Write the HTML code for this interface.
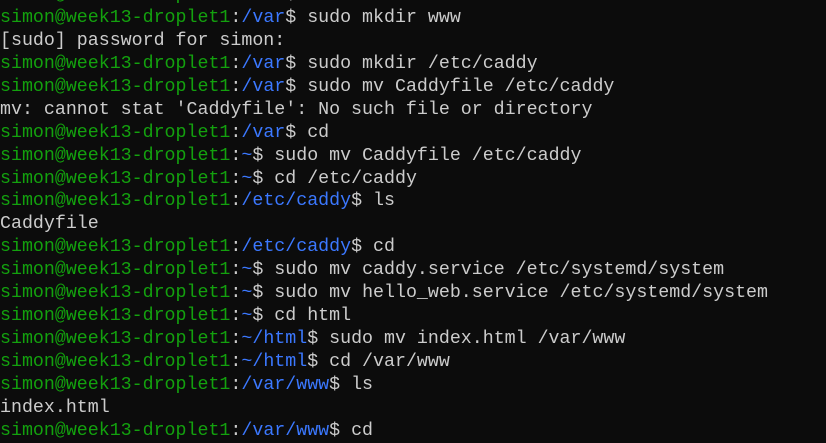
<!DOCTYPE html>
<html><head><style>
html,body{margin:0;padding:0;background:#0c0c0c;width:826px;height:424px;overflow:hidden}
pre{margin:0;position:absolute;left:0;top:-16px;font-family:"Liberation Mono",monospace;font-size:18.3px;line-height:22.94px;color:#cccccc;white-space:pre}
.g{color:#13a10e}.b{color:#3b78ff}
</style></head><body><pre><span class="g">simon@week13-droplet1</span>:<span class="b">/var</span>$ cd
<span class="g">simon@week13-droplet1</span>:<span class="b">/var</span>$ sudo mkdir www
[sudo] password for simon:
<span class="g">simon@week13-droplet1</span>:<span class="b">/var</span>$ sudo mkdir /etc/caddy
<span class="g">simon@week13-droplet1</span>:<span class="b">/var</span>$ sudo mv Caddyfile /etc/caddy
mv: cannot stat 'Caddyfile': No such file or directory
<span class="g">simon@week13-droplet1</span>:<span class="b">/var</span>$ cd
<span class="g">simon@week13-droplet1</span>:<span class="b">~</span>$ sudo mv Caddyfile /etc/caddy
<span class="g">simon@week13-droplet1</span>:<span class="b">~</span>$ cd /etc/caddy
<span class="g">simon@week13-droplet1</span>:<span class="b">/etc/caddy</span>$ ls
Caddyfile
<span class="g">simon@week13-droplet1</span>:<span class="b">/etc/caddy</span>$ cd
<span class="g">simon@week13-droplet1</span>:<span class="b">~</span>$ sudo mv caddy.service /etc/systemd/system
<span class="g">simon@week13-droplet1</span>:<span class="b">~</span>$ sudo mv hello_web.service /etc/systemd/system
<span class="g">simon@week13-droplet1</span>:<span class="b">~</span>$ cd html
<span class="g">simon@week13-droplet1</span>:<span class="b">~/html</span>$ sudo mv index.html /var/www
<span class="g">simon@week13-droplet1</span>:<span class="b">~/html</span>$ cd /var/www
<span class="g">simon@week13-droplet1</span>:<span class="b">/var/www</span>$ ls
index.html
<span class="g">simon@week13-droplet1</span>:<span class="b">/var/www</span>$ cd
</pre></body></html>
